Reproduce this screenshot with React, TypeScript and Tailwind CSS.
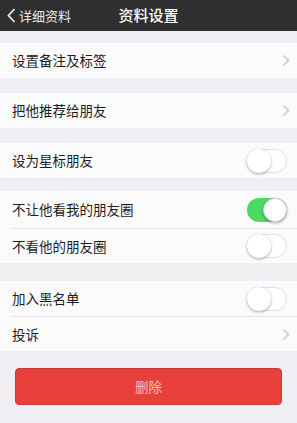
import React from "react";

const font = { fontFamily: '"Noto Sans CJK SC", "Noto Sans", sans-serif' };

function Chevron() {
  return (
    <svg width="8" height="13" viewBox="0 0 8 13" className="mr-[7px]">
      <path d="M1.5 1.5 L6.5 6.5 L1.5 11.5" fill="none" stroke="#c4c4c9" strokeWidth="1.4" />
    </svg>
  );
}

function Toggle({ on }: { on?: boolean }) {
  return (
    <div
      className={
        "relative w-[40px] h-[24px] rounded-full mr-[10px] " +
        (on ? "bg-[#4cd964]" : "bg-white border border-[#e0e0e5]")
      }
    >
      <div
        className={
          "absolute top-0 w-[24px] h-[24px] rounded-full bg-white shadow-[0_1px_3px_rgba(0,0,0,0.35)] " +
          (on ? "right-0 border border-[#d8d8d8]" : "left-[-1px] top-[-1px]")
        }
      />
    </div>
  );
}

function Row({
  label,
  right,
  h = 36,
  sep,
}: {
  label: string;
  right: React.ReactNode;
  h?: number;
  sep?: boolean;
}) {
  return (
    <div className="bg-[#fbfbfc] relative">
      <div className="flex items-center justify-between pl-[12px]" style={{ height: h }}>
        <span className="text-[13.5px] text-[#1c1c1c]">{label}</span>
        {right}
      </div>
      {sep && <div className="ml-[12px] h-px bg-[#e2e2e6]" />}
    </div>
  );
}

export default function App() {
  return (
    <div className="w-[297px] h-[423px] bg-[#efeff3] overflow-hidden" style={font}>
      <div className="h-[31px] bg-[#2f2f31] flex items-center relative">
        <div className="flex items-center pl-[7px] text-[#e8e8e8] text-[13px]">
          <svg width="9" height="15" viewBox="0 0 9 15" className="mr-[3px]">
            <path d="M7.5 1 L1.5 7.5 L7.5 14" fill="none" stroke="#e8e8e8" strokeWidth="1.8" />
          </svg>
          <span>详细资料</span>
        </div>
        <div className="absolute left-0 right-0 text-center text-[15px] font-medium text-white pointer-events-none">
          资料设置
        </div>
      </div>
      <div className="h-[12px]" />
      <Row label="设置备注及标签" right={<Chevron />} h={35} />
      <div className="h-[15px]" />
      <Row label="把他推荐给朋友" right={<Chevron />} h={35} />
      <div className="h-[15px]" />
      <Row label="设为星标朋友" right={<Toggle />} h={35} />
      <div className="h-[13px]" />
      <Row label="不让他看我的朋友圈" right={<Toggle on />} h={37} sep />
      <Row label="不看他的朋友圈" right={<Toggle />} h={34} />
      <div className="h-[18px]" />
      <Row label="加入黑名单" right={<Toggle />} h={35} sep />
      <Row label="投诉" right={<Chevron />} h={34} />
      <div className="px-[15px] pt-[17px]">
        <div className="h-[37px] rounded-[4px] bg-[#e8403c] border border-[#c9383a] flex items-center justify-center text-[13.5px] text-[#f7c0bd]">
          删除
        </div>
      </div>
    </div>
  );
}
